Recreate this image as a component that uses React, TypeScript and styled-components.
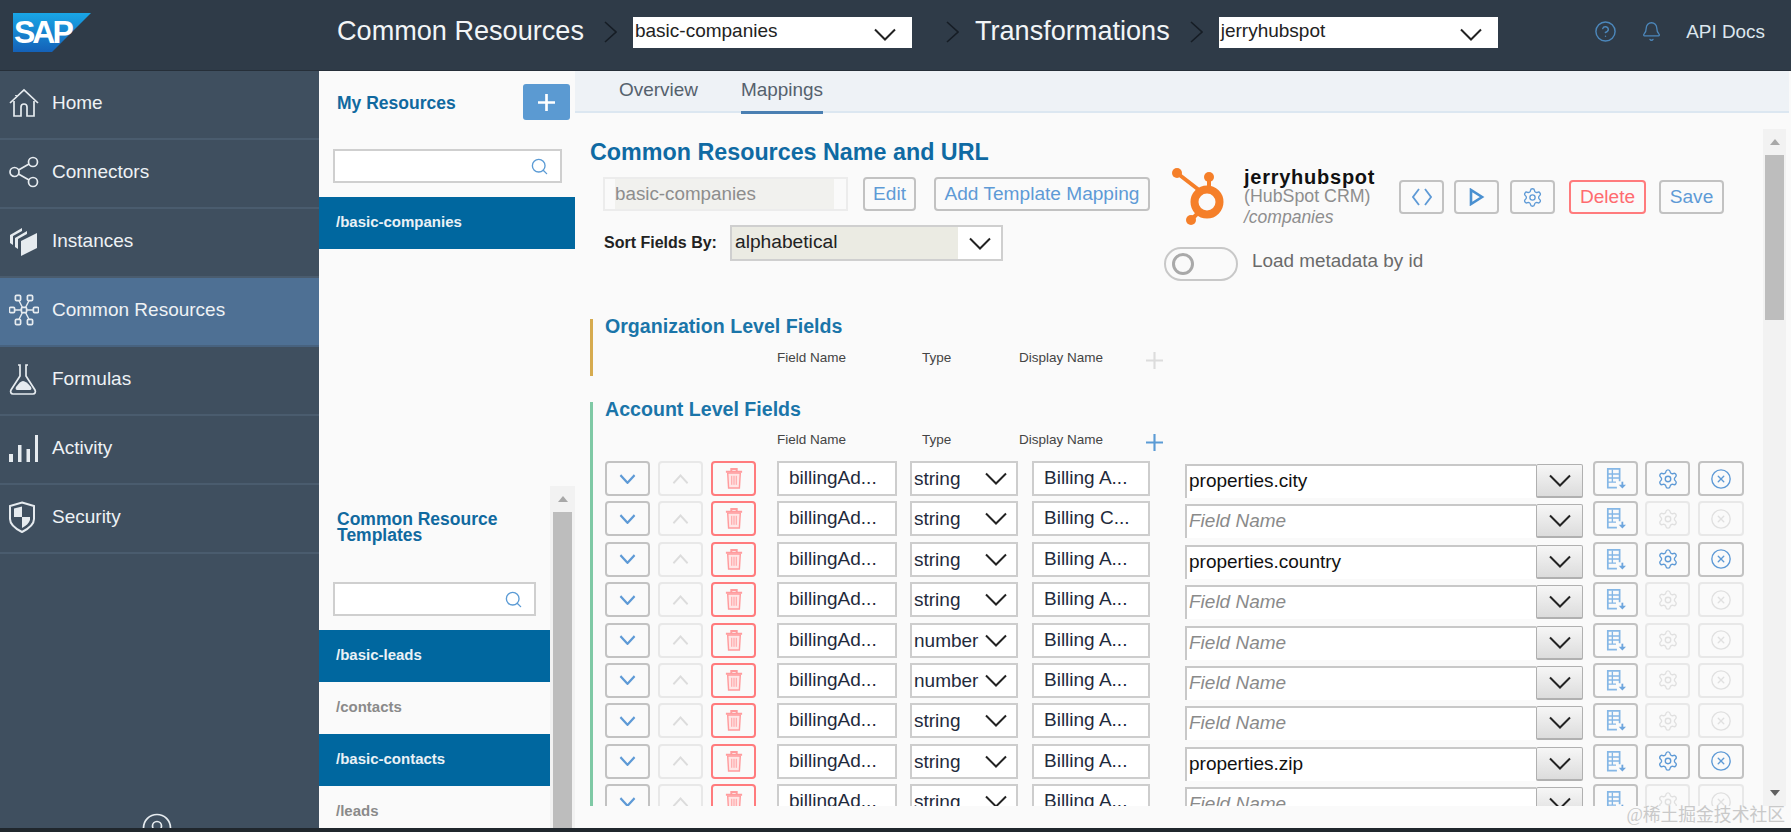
import React from "react";
import styled, { createGlobalStyle } from "styled-components";
import { Settings, CircleX, Search, CircleHelp, Bell } from "lucide-react";

const Global = createGlobalStyle`
  html, body { margin: 0; padding: 0; background: #fafafa; }
  body { font-family: "Liberation Sans", Arial, sans-serif; overflow: hidden; }
  * { box-sizing: border-box; }
`;

const Page = styled.div`
  position: relative;
  width: 1791px;
  height: 832px;
  display: flex;
  flex-direction: column;
  overflow: hidden;
  background: #fafafa;
`;

const Header = styled.header`
  height: 71px;
  flex: none;
  display: flex;
  align-items: center;
  background: #2f3b48;
  border-bottom: 1px solid #262f39;
`;
const LogoBox = styled.div`
  width: 337px;
  padding-left: 13px;
  flex: none;
  display: flex;
  margin-top: -4px;
`;
const HeaderTitle = styled.div`
  font-size: 27.1px;
  color: #f2f5f7;
  white-space: nowrap;
  margin-top: -8px;
`;
const Crumb = styled.svg<{ $left: number; $right: number }>`
  width: 13px;
  height: 22px;
  flex: none;
  margin: -6px ${(p) => p.$right}px 0 ${(p) => p.$left}px;
`;
const HeaderSelect = styled.div`
  width: 279px;
  height: 31px;
  margin-top: -6px;
  flex: none;
  background: #fff;
  display: flex;
  align-items: center;
  justify-content: space-between;
  padding: 0 15px 2px 2px;
  font-size: 19px;
  color: #222;
  line-height: 28px;
`;
const SelectChevron = styled.span`
  display: flex;
  margin-top: 6px;
`;
const HeaderRight = styled.div`
  margin-left: auto;
  margin-top: -7px;
  padding-right: 26px;
  display: flex;
  align-items: center;
  color: #4c87bb;
`;
const ApiDocs = styled.span`
  font-size: 18.9px;
  color: #dde6ee;
  margin-left: 24px;
`;
const BellWrap = styled.span`
  display: flex;
  margin-left: 24px;
`;

const Body = styled.div`
  flex: 1;
  min-height: 0;
  display: flex;
`;
const BottomBar = styled.div`
  height: 4px;
  flex: none;
  background: #20272d;
`;

const Sidebar = styled.nav`
  width: 319px;
  flex: none;
  display: flex;
  flex-direction: column;
  background: #3f4f5f;
`;
const NavItem = styled.div<{ $active?: boolean }>`
  height: 69px;
  flex: none;
  display: flex;
  align-items: center;
  padding: 0 0 3px 9px;
  gap: 13px;
  font-size: 19px;
  color: #eef2f5;
  background: ${(p) => (p.$active ? "#4e7094" : "#3f4f5f")};
  border-bottom: 2px solid ${(p) => (p.$active ? "#47627f" : "#4a5c6e")};
`;
const NavIcon = styled.svg`
  width: 30px;
  height: 32px;
  flex: none;
  fill: none;
  stroke: #e6ebef;
  stroke-width: 1.7;
`;
const SidebarFoot = styled.div`
  margin-top: auto;
  height: 15px;
  overflow: hidden;
  display: flex;
  justify-content: center;
  padding-right: 5px;
`;

const Panel = styled.aside`
  width: 256px;
  flex: none;
  display: flex;
  flex-direction: column;
  background: #fafafa;
`;
const PanelHead = styled.div`
  height: 36px;
  margin-top: 13px;
  padding: 2px 5px 0 18px;
  display: flex;
  align-items: center;
  justify-content: space-between;
`;
const PanelTitle = styled.div`
  font-size: 17.5px;
  font-weight: bold;
  line-height: 16px;
  color: #10699f;
`;
const PlusButton = styled.div`
  width: 47px;
  height: 36px;
  margin-top: -2px;
  background: #5b9ad2;
  border-radius: 3px;
  display: flex;
  align-items: center;
  justify-content: center;
`;
const SearchBox = styled.div<{ $w: number; $top: number }>`
  width: ${(p) => p.$w}px;
  height: 34px;
  margin: ${(p) => p.$top}px 0 14px 14px;
  border: 2px solid #cfcfcf;
  background: #fff;
  display: flex;
  align-items: center;
  justify-content: flex-end;
  padding-right: 11px;
  color: #5b9bd5;
`;
const ResourceRow = styled.div<{ $selected?: boolean }>`
  height: 52px;
  flex: none;
  display: flex;
  align-items: center;
  padding: 0 0 3px 17px;
  font-size: 15px;
  font-weight: bold;
  color: ${(p) => (p.$selected ? "#eaf1f6" : "#8a8a8a")};
  background: ${(p) => (p.$selected ? "#00679f" : "transparent")};
`;
const TemplateArea = styled.div`
  flex: 1;
  min-height: 0;
  margin-top: 237px;
  display: flex;
  overflow: hidden;
`;
const TemplateList = styled.div`
  flex: 1;
  min-width: 0;
  padding-top: 25px;
  & > ${PanelTitle} {
    padding-left: 18px;
  }
`;
const ScrollTrack = styled.div<{ $w: number }>`
  width: ${(p) => p.$w}px;
  flex: none;
  background: #f2f2f2;
  display: flex;
  flex-direction: column;
  align-items: center;
`;
const ScrollArrow = styled.div<{ $down?: boolean }>`
  height: 26px;
  flex: none;
  display: flex;
  align-items: center;
  justify-content: center;
  &::after {
    content: "";
    border-left: 5.5px solid transparent;
    border-right: 5.5px solid transparent;
    ${(p) =>
      p.$down ? "border-top: 6px solid #606060;" : "border-bottom: 6px solid #a8a8a8;"}
  }
`;
const ScrollThumb = styled.div<{ $h?: number }>`
  width: 19px;
  background: #bdbdbd;
  flex: ${(p) => (p.$h ? `none` : 1)};
  height: ${(p) => (p.$h ? `${p.$h}px` : "auto")};
`;
const ScrollSpace = styled.div`
  flex: 1;
`;

const Main = styled.main`
  flex: 1;
  min-width: 0;
  display: flex;
  flex-direction: column;
  padding-bottom: 22px;
`;
const Tabs = styled.div`
  height: 42px;
  flex: none;
  display: flex;
  gap: 43px;
  padding-left: 44px;
  margin-right: 2px;
  background: #eef2f6;
  border-bottom: 2px solid #dce7f1;
`;
const Tab = styled.div<{ $active?: boolean }>`
  height: 43px;
  padding-top: 8px;
  font-size: 18.95px;
  color: #55616d;
  border-bottom: 3px solid ${(p) => (p.$active ? "#4a7fb2" : "transparent")};
`;
const MainRow = styled.div`
  flex: 1;
  min-height: 0;
  display: flex;
  padding-right: 5px;
`;
const Content = styled.div`
  flex: 1;
  min-width: 0;
  overflow: hidden;
  padding-left: 15px;
`;
const MainScroll = styled.div`
  margin-top: 16px;
  display: flex;
`;

const Top = styled.div`
  height: 206px;
  display: flex;
`;
const TopLeft = styled.div`
  width: 581px;
  flex: none;
  padding-top: 26px;
`;
const MainTitle = styled.h1`
  margin: 0;
  font-size: 23.3px;
  line-height: 26px;
  font-weight: bold;
  color: #0f6aa3;
`;
const NameRow = styled.div`
  margin: 12px 0 0 13px;
  display: flex;
  align-items: center;
`;
const DisabledInput = styled.div`
  width: 245px;
  height: 34px;
  padding: 0 12px 0 10px;
  border: 2px solid #ececec;
  margin-right: 15px;
`;
const DisabledFill = styled.div`
  height: 100%;
  background: #f1f1ee;
  font-size: 18.8px;
  line-height: 30px;
  color: #8d8d8d;
`;
const OutlineButton = styled.div<{ $w: number; $h?: number; $danger?: boolean; $off?: boolean; $mr?: number }>`
  width: ${(p) => p.$w}px;
  height: ${(p) => p.$h ?? 34}px;
  flex: none;
  margin-right: ${(p) => p.$mr ?? 0}px;
  border: 2px solid ${(p) => (p.$danger ? "#ff7b7d" : p.$off ? "#e8e8e8" : "#c2c2c2")};
  border-radius: 4px;
  display: flex;
  align-items: center;
  justify-content: center;
  font-size: 19.1px;
  color: ${(p) => (p.$danger ? "#ff6b70" : p.$off ? "#e0e0e0" : "#5e9ad6")};
`;
const SortRow = styled.div`
  margin: 14px 0 0 14px;
  display: flex;
  align-items: center;
`;
const SortLabel = styled.label`
  width: 126px;
  font-size: 16px;
  font-weight: bold;
  color: #222;
`;
const SortSelect = styled.div`
  width: 273px;
  height: 36px;
  border: 2px solid #cfcfcf;
  display: flex;
  background: #fff;
`;
const SortFill = styled.div`
  width: 226px;
  background: #ebebe3;
  padding-left: 3px;
  font-size: 19.2px;
  line-height: 30px;
  color: #222;
`;
const SortChevron = styled.div`
  flex: 1;
  display: flex;
  align-items: center;
  justify-content: center;
`;

const TopRight = styled.div`
  flex: 1;
  padding-top: 55px;
`;
const ConnectorRow = styled.div`
  display: flex;
  height: 60px;
`;
const ConnectorInfo = styled.div`
  width: 155px;
  flex: none;
  margin-left: 17px;
`;
const ConnectorName = styled.div`
  font-size: 20px;
  font-weight: bold;
  letter-spacing: 0.75px;
  line-height: 18px;
  color: #111;
`;
const ConnectorSub = styled.div`
  font-size: 17.8px;
  line-height: 20px;
  color: #8e8e8e;
`;
const ConnectorPath = styled.div`
  font-size: 17.5px;
  font-style: italic;
  line-height: 22px;
  color: #8e8e8e;
`;
const ActionRow = styled.div`
  display: flex;
  padding-top: 12px;
`;
const ToggleRow = styled.div`
  margin: 18px 0 0 -7px;
  display: flex;
  align-items: flex-start;
  gap: 14px;
  font-size: 18.9px;
  color: #6a6a6a;
`;
const Toggle = styled.div`
  width: 74px;
  height: 34px;
  margin-top: 1px;
  border: 2px solid #c8c8c8;
  border-radius: 17px;
  display: flex;
  align-items: center;
  padding-left: 6px;
`;
const Knob = styled.div`
  width: 22px;
  height: 22px;
  border: 3px solid #a9a9a9;
  border-radius: 50%;
`;
const ToggleLabel = styled.span`
  line-height: 30px;
`;

const Section = styled.section<{ $color: string; $clip?: boolean }>`
  margin-bottom: 26px;
  border-left: 3px solid ${(p) => p.$color};
  padding: 0 0 ${(p) => (p.$clip ? 0 : 9)}px 12px;
`;
const SectionTitle = styled.h2`
  margin: 0;
  font-size: 19.6px;
  line-height: 14px;
  font-weight: bold;
  color: #1a75a9;
`;
const ColumnHead = styled.div<{ $top: number }>`
  height: 20px;
  margin: ${(p) => p.$top}px 0 0 172px;
  display: flex;
  align-items: center;
  font-size: 13.5px;
  color: #444;
`;
const ColumnLabel = styled.span<{ $w: number }>`
  width: ${(p) => p.$w}px;
  flex: none;
`;
const HeadPlus = styled.span`
  display: flex;
  margin-top: 7px;
`;
const Rows = styled.div`
  margin-top: 12px;
  display: flex;
  flex-direction: column;
  gap: 5.4px;
`;
const Row = styled.div`
  height: 35px;
  flex: none;
  display: flex;
`;
const RowBox = styled.div<{ $w: number; $ml: number }>`
  width: ${(p) => p.$w}px;
  margin-left: ${(p) => p.$ml}px;
  height: 35px;
  flex: none;
  border: 2px solid #cdcdcd;
  background: #fff;
  font-size: 19px;
  line-height: 29px;
  color: #1f2a3c;
  white-space: nowrap;
  overflow: hidden;
`;
const FieldText = styled(RowBox)`
  padding-left: 10px;
`;
const TypeBox = styled(RowBox)`
  display: flex;
  align-items: center;
  justify-content: space-between;
  padding: 0 8px 0 2px;
`;
const Combo = styled.div`
  width: 398px;
  height: 35px;
  margin: 3px 10px 0 35px;
  flex: none;
  display: flex;
`;
const ComboInput = styled.div<{ $placeholder?: boolean }>`
  flex: 1;
  height: 34px;
  background: #fff;
  border-top: 2px solid #c8c8c8;
  border-left: 2px solid #c8c8c8;
  padding-left: 2px;
  font-size: 19px;
  line-height: 30px;
  color: ${(p) => (p.$placeholder ? "#8a8a8a" : "#111")};
  font-style: ${(p) => (p.$placeholder ? "italic" : "normal")};
`;
const ComboButton = styled.div`
  width: 47px;
  height: 34px;
  flex: none;
  border: 1px solid #b0b0b0;
  border-bottom-width: 2px;
  border-radius: 2px;
  background: linear-gradient(#f6f6f6, #dcdcdc);
  display: flex;
  align-items: center;
  justify-content: center;
`;
const Watermark = styled.div`
  position: absolute;
  right: 6px;
  bottom: 6px;
  font-family: "Liberation Serif", "Noto Sans CJK SC", serif;
  font-size: 17.8px;
  color: #c9c9c9;
  white-space: nowrap;
`;

const Chevron = ({ w = 24, h = 13, up = false, color = "#222", sw = 2 }: { w?: number; h?: number; up?: boolean; color?: string; sw?: number }) => (
  <svg width={w} height={h} viewBox="0 0 24 13" preserveAspectRatio="none" fill="none">
    <polyline points={up ? "2,12 12,2 22,12" : "2,1.5 12,11.5 22,1.5"} stroke={color} strokeWidth={sw} />
  </svg>
);
const CrumbIcon = ({ l, r }: { l: number; r: number }) => (
  <Crumb $left={l} $right={r} viewBox="0 0 13 22" fill="none">
    <polyline points="1,1 12,11 1,21" stroke="#161d25" strokeWidth="1.6" />
  </Crumb>
);
const Plus = ({ size, color, sw = 2.5 }: { size: number; color: string; sw?: number }) => (
  <svg width={size} height={size} viewBox="0 0 16 16">
    <path d="M8 0v16M0 8h16" stroke={color} strokeWidth={sw} />
  </svg>
);
const TrashIcon = () => (
  <svg width="18" height="23" viewBox="0 0 20 24" fill="none" stroke="#ff9c9e">
    <path d="M1 4.5h18M7 3.5V1.5h6v2" strokeWidth="2.2" />
    <path d="M3 6l1 16.5h12L17 6z" strokeWidth="1.6" fill="#ffe6e6" />
    <path d="M7.5 9v10M10 9v10M12.5 9v10" strokeWidth="1.1" />
  </svg>
);
const FileIcon = () => (
  <svg width="20" height="23" viewBox="0 0 22 24" fill="none" stroke="#85b7e6" strokeWidth="1.9">
    <path d="M12 22H2V1.5h13V15" />
    <path d="M2 7h13M2 11.5h13M2 16h9M7 2v14" strokeWidth="1.5" />
    <path d="M14 19h8l-4 4z" fill="#6ea6de" stroke="none" />
    <path d="M18 15.5v4" stroke="#6ea6de" strokeWidth="2" />
  </svg>
);

const HomeI = () => (
  <NavIcon viewBox="0 0 30 32">
    <path d="M1 16L15 3l14 13" />
    <path d="M5 14v15h7v-9a3 3 0 0 1 6 0v9h7V14" />
    <path d="M7 8V9" />
  </NavIcon>
);
const ConnectI = () => (
  <NavIcon viewBox="0 0 30 32">
    <circle cx="5.5" cy="16" r="4.5" />
    <circle cx="24" cy="6" r="4.5" />
    <circle cx="24" cy="26" r="4.5" />
    <path d="M9.5 14l10.5-6M9.5 18l10.5 6" />
  </NavIcon>
);
const InstancesI = () => (
  <NavIcon viewBox="0 0 30 32" style={{ stroke: "none", fill: "#e6ebef" }}>
    <path d="M1 10L13 3v3L4 11v9L1 18zM6 13L18 6v3L9 14v10l-3-2zM12 16l16-8v15l-16 8z" />
  </NavIcon>
);
const CommonI = () => (
  <NavIcon viewBox="0 0 30 32">
    {[
      [9, 4], [21, 4], [3, 16], [15, 16], [27, 16], [9, 28], [21, 28],
    ].map(([x, y]) => (
      <rect key={`${x}-${y}`} x={x - 2.6} y={y - 2.6} width="5.2" height="5.2" rx="1.2" />
    ))}
    <path d="M5.6 16h6.8M17.6 16h6.8M10 6.6l3.5 7M20 6.6l-3.5 7M10 25.4l3.5-7M20 25.4l-3.5-7" strokeWidth="1.3" />
  </NavIcon>
);
const FlaskI = () => (
  <NavIcon viewBox="0 0 30 32">
    <path d="M9 2h2v11L2 27c-1 2 0 4 2 4h20c2 0 3-2 2-4l-9-14V2h2" />
    <path d="M7 24c3-4 5-6 7-6s5 2 8 6c1 2 0 3-1 3H8c-1 0-2-1-1-3z" fill="#e6ebef" stroke="none" />
  </NavIcon>
);
const ActivityI = () => (
  <NavIcon viewBox="0 0 30 32" style={{ stroke: "none", fill: "#e6ebef" }}>
    <path d="M0 22h4v8H0zM9 13h3.5v17H9zM17.5 17H21v13h-3.5zM26 3h3v27h-3z" />
  </NavIcon>
);
const ShieldI = () => (
  <NavIcon viewBox="0 0 30 32">
    <path d="M13 1.5L25 5v13c0 6-6 10-12 13C7 28 1 24 1 18V5z" strokeWidth="2" />
    <path d="M13 5.5L5 7.5V16h8zM13 16h8v3c-1 3-4 6-8 8z" fill="#e6ebef" stroke="none" />
  </NavIcon>
);

const nav: { label: string; icon: React.ReactNode; active?: boolean }[] = [
  { label: "Home", icon: <HomeI /> },
  { label: "Connectors", icon: <ConnectI /> },
  { label: "Instances", icon: <InstancesI /> },
  { label: "Common Resources", icon: <CommonI />, active: true },
  { label: "Formulas", icon: <FlaskI /> },
  { label: "Activity", icon: <ActivityI /> },
  { label: "Security", icon: <ShieldI /> },
];

const rows: { type: string; display: string; map?: string }[] = [
  { type: "string", display: "Billing A...", map: "properties.city" },
  { type: "string", display: "Billing C..." },
  { type: "string", display: "Billing A...", map: "properties.country" },
  { type: "string", display: "Billing A..." },
  { type: "number", display: "Billing A..." },
  { type: "number", display: "Billing A..." },
  { type: "string", display: "Billing A..." },
  { type: "string", display: "Billing A...", map: "properties.zip" },
  { type: "string", display: "Billing A..." },
];

const Scroller = ({ w, thumb, down }: { w: number; thumb?: number; down?: boolean }) => (
  <ScrollTrack $w={w}>
    <ScrollArrow />
    <ScrollThumb $h={thumb} />
    {thumb ? <ScrollSpace /> : null}
    {down ? <ScrollArrow $down /> : null}
  </ScrollTrack>
);

export default function App() {
  return (
    <Page>
      <Global />
      <Header>
        <LogoBox>
          <svg width="78" height="40" viewBox="0 0 78 40">
            <defs>
              <linearGradient id="sapg" x1="0" y1="0" x2="0" y2="1">
                <stop offset="0" stopColor="#19a6e6" />
                <stop offset="1" stopColor="#1461b8" />
              </linearGradient>
            </defs>
            <polygon points="0,0 78,0 39,39 0,39" fill="url(#sapg)" />
            <text x="1" y="30" fontFamily="Liberation Sans" fontWeight="bold" fontSize="32" letterSpacing="-3" fill="#fff">SAP</text>
          </svg>
        </LogoBox>
        <HeaderTitle>Common Resources</HeaderTitle>
        <CrumbIcon l={20} r={16} />
        <HeaderSelect>
          basic-companies
          <SelectChevron>
            <Chevron />
          </SelectChevron>
        </HeaderSelect>
        <CrumbIcon l={34} r={16} />
        <HeaderTitle>Transformations</HeaderTitle>
        <CrumbIcon l={20} r={16} />
        <HeaderSelect>
          jerryhubspot
          <SelectChevron>
            <Chevron />
          </SelectChevron>
        </HeaderSelect>
        <HeaderRight>
          <CircleHelp size={23} strokeWidth={1.5} />
          <BellWrap>
            <Bell size={21} strokeWidth={1.5} />
          </BellWrap>
          <ApiDocs>API Docs</ApiDocs>
        </HeaderRight>
      </Header>
      <Body>
        <Sidebar>
          {nav.map((n) => (
            <NavItem key={n.label} $active={n.active}>
              {n.icon}
              {n.label}
            </NavItem>
          ))}
          <SidebarFoot>
            <svg width="30" height="30" viewBox="0 0 30 30" fill="none" stroke="#e6ebef" strokeWidth="1.7">
              <circle cx="15" cy="15" r="13.5" />
              <circle cx="15" cy="13" r="4.5" />
            </svg>
          </SidebarFoot>
        </Sidebar>
        <Panel>
          <PanelHead>
            <PanelTitle>My Resources</PanelTitle>
            <PlusButton>
              <Plus size={17} color="#fff" />
            </PlusButton>
          </PanelHead>
          <SearchBox $w={229} $top={29}>
            <Search size={19} strokeWidth={1.7} />
          </SearchBox>
          <ResourceRow $selected>/basic-companies</ResourceRow>
          <TemplateArea>
            <TemplateList>
              <PanelTitle>
                Common Resource
                <br />
                Templates
              </PanelTitle>
              <SearchBox $w={203} $top={39}>
                <Search size={19} strokeWidth={1.7} />
              </SearchBox>
              <ResourceRow $selected>/basic-leads</ResourceRow>
              <ResourceRow>/contacts</ResourceRow>
              <ResourceRow $selected>/basic-contacts</ResourceRow>
              <ResourceRow>/leads</ResourceRow>
            </TemplateList>
            <Scroller w={25} />
          </TemplateArea>
        </Panel>
        <Main>
          <Tabs>
            <Tab>Overview</Tab>
            <Tab $active>Mappings</Tab>
          </Tabs>
          <MainRow>
            <Content>
              <Top>
                <TopLeft>
                  <MainTitle>Common Resources Name and URL</MainTitle>
                  <NameRow>
                    <DisabledInput>
                      <DisabledFill>basic-companies</DisabledFill>
                    </DisabledInput>
                    <OutlineButton $w={53} $mr={18}>Edit</OutlineButton>
                    <OutlineButton $w={216}>Add Template Mapping</OutlineButton>
                  </NameRow>
                  <SortRow>
                    <SortLabel>Sort Fields By:</SortLabel>
                    <SortSelect>
                      <SortFill>alphabetical</SortFill>
                      <SortChevron>
                        <Chevron />
                      </SortChevron>
                    </SortSelect>
                  </SortRow>
                </TopLeft>
                <TopRight>
                  <ConnectorRow>
                    <svg width="56" height="60" viewBox="0 0 56 60" fill="none" stroke="#f57f29">
                      <circle cx="36" cy="34" r="12.5" strokeWidth="8" />
                      <path d="M6 5l22 17M38 9v12M20 52l9-9" strokeWidth="4" />
                      <circle cx="6" cy="5" r="5" fill="#f57f29" stroke="none" />
                      <circle cx="38" cy="9" r="5" fill="#f57f29" stroke="none" />
                      <circle cx="20" cy="52" r="5" fill="#f57f29" stroke="none" />
                    </svg>
                    <ConnectorInfo>
                      <ConnectorName>jerryhubspot</ConnectorName>
                      <ConnectorSub>(HubSpot CRM)</ConnectorSub>
                      <ConnectorPath>/companies</ConnectorPath>
                    </ConnectorInfo>
                    <ActionRow>
                      <OutlineButton $w={45} $mr={10}>
                        <svg width="20" height="18" viewBox="0 0 20 18" fill="none" stroke="#5e9ad6" strokeWidth="1.8">
                          <path d="M7 1L1 9l6 8M13 1l6 8-6 8" />
                        </svg>
                      </OutlineButton>
                      <OutlineButton $w={45} $mr={11}>
                        <svg width="16" height="18" viewBox="0 0 16 18" fill="none" stroke="#4a90d0" strokeWidth="2.6">
                          <path d="M2 2v14l11-7z" />
                        </svg>
                      </OutlineButton>
                      <OutlineButton $w={45} $mr={14}>
                        <Settings size={21} strokeWidth={1.5} />
                      </OutlineButton>
                      <OutlineButton $w={77} $mr={13} $danger>Delete</OutlineButton>
                      <OutlineButton $w={65}>Save</OutlineButton>
                    </ActionRow>
                  </ConnectorRow>
                  <ToggleRow>
                    <Toggle>
                      <Knob />
                    </Toggle>
                    <ToggleLabel>Load metadata by id</ToggleLabel>
                  </ToggleRow>
                </TopRight>
              </Top>
              <Section $color="#d6ab4f">
                <SectionTitle>Organization Level Fields</SectionTitle>
                <ColumnHead $top={14}>
                  <ColumnLabel $w={145}>Field Name</ColumnLabel>
                  <ColumnLabel $w={97}>Type</ColumnLabel>
                  <ColumnLabel $w={127}>Display Name</ColumnLabel>
                  <HeadPlus>
                    <Plus size={17} color="#dcdcdc" sw={2} />
                  </HeadPlus>
                </ColumnHead>
              </Section>
              <Section $color="#7fc9a5" $clip>
                <SectionTitle>Account Level Fields</SectionTitle>
                <ColumnHead $top={13}>
                  <ColumnLabel $w={145}>Field Name</ColumnLabel>
                  <ColumnLabel $w={97}>Type</ColumnLabel>
                  <ColumnLabel $w={127}>Display Name</ColumnLabel>
                  <HeadPlus>
                    <Plus size={17} color="#5b9bd5" sw={2} />
                  </HeadPlus>
                </ColumnHead>
                <Rows>
                  {rows.map((r, i) => (
                    <Row key={i}>
                      <OutlineButton $w={45} $h={35} $mr={8}>
                        <Chevron w={17} h={10} color="#5e9ad6" sw={3} />
                      </OutlineButton>
                      <OutlineButton $w={45} $h={35} $mr={8} $off>
                        <Chevron w={17} h={10} up color="#dcdcdc" sw={2.6} />
                      </OutlineButton>
                      <OutlineButton $w={45} $h={35} $danger>
                        <TrashIcon />
                      </OutlineButton>
                      <FieldText $w={120} $ml={21}>billingAd...</FieldText>
                      <TypeBox $w={108} $ml={13}>
                        {r.type}
                        <Chevron />
                      </TypeBox>
                      <FieldText $w={118} $ml={14}>{r.display}</FieldText>
                      <Combo>
                        <ComboInput $placeholder={!r.map}>{r.map ?? "Field Name"}</ComboInput>
                        <ComboButton>
                          <Chevron />
                        </ComboButton>
                      </Combo>
                      <OutlineButton $w={45} $h={35} $mr={7}>
                        <FileIcon />
                      </OutlineButton>
                      <OutlineButton $w={45} $h={35} $mr={8} $off={!r.map}>
                        <Settings size={22} strokeWidth={1.5} />
                      </OutlineButton>
                      <OutlineButton $w={46} $h={35} $off={!r.map}>
                        <CircleX size={22} strokeWidth={1.5} />
                      </OutlineButton>
                    </Row>
                  ))}
                </Rows>
              </Section>
            </Content>
            <MainScroll>
              <Scroller w={23} thumb={165} down />
            </MainScroll>
          </MainRow>
        </Main>
      </Body>
      <BottomBar />
      <Watermark>@稀土掘金技术社区</Watermark>
    </Page>
  );
}
